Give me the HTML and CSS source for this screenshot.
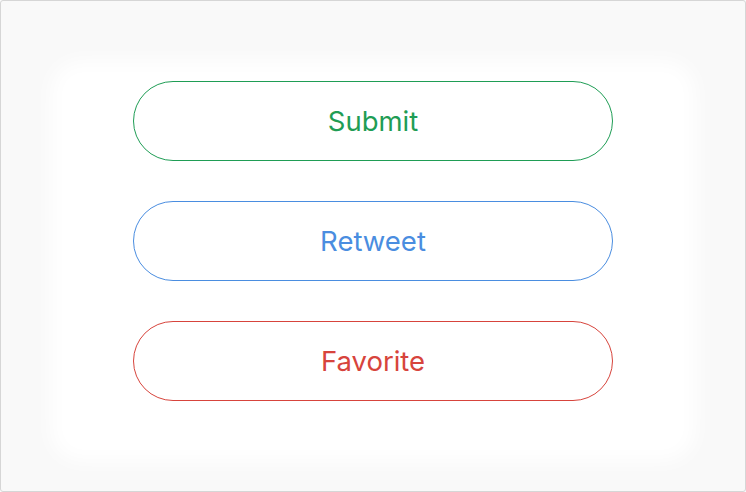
FILE: index.html
```html
<!DOCTYPE html>
<html>
<head>
<meta charset="utf-8">
<link rel="stylesheet" href="styles.css">
</head>
<body>
<div class="frame">
  <div class="glow"></div>
  <div class="stack">
    <button class="pill pill-green">Submit</button>
    <button class="pill pill-blue">Retweet</button>
    <button class="pill pill-red">Favorite</button>
  </div>
</div>
</body>
</html>
```
FILE: styles.css
```css
html, body {
  margin: 0;
  padding: 0;
  width: 746px;
  height: 492px;
  overflow: hidden;
  background: #fafafa;
}
.frame {
  position: relative;
  box-sizing: border-box;
  width: 746px;
  height: 492px;
  border: 1px solid #d6d6d6;
  border-radius: 3px;
  background: #f9f9f9;
}
.glow {
  position: absolute;
  left: 50px;
  top: 60px;
  right: 50px;
  bottom: 30px;
  background: #ffffff;
  border-radius: 30px;
  filter: blur(10px);
}
.stack {
  position: relative;
  display: flex;
  flex-direction: column;
  align-items: center;
  gap: 40px;
  padding-top: 80px;
}
.pill {
  box-sizing: border-box;
  width: 480px;
  height: 80px;
  border-radius: 40px;
  background: #ffffff;
  border: 1px solid;
  font-family: Inter, "Noto Sans", sans-serif;
  font-size: 27.5px;
  font-weight: 400;
  padding: 0;
  cursor: pointer;
}
.pill-green { color: #1f9d55; border-color: #1f9d55; }
.pill-blue { color: #4a8de0; border-color: #4a8de0; }
.pill-red { color: #d7443c; border-color: #d7443c; }
```
